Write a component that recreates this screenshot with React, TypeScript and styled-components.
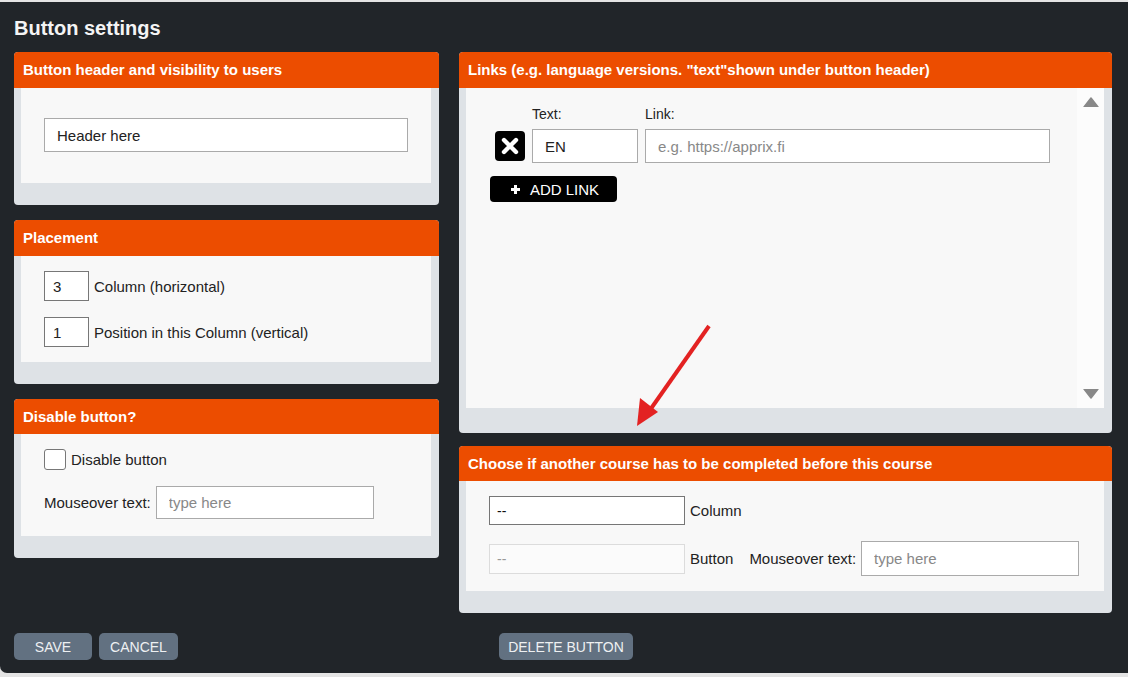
import React from 'react'
import styled, { createGlobalStyle } from 'styled-components'

const GlobalStyle = createGlobalStyle`
  html, body {
    margin: 0;
    padding: 0;
    background: #e4e4e4;
    overflow: hidden;
    font-family: "Liberation Sans", Arial, sans-serif;
  }
  * { box-sizing: border-box; }
`

const Page = styled.div`
  position: relative;
  margin-top: 2px;
  width: 1140px;
  height: 671px;
  background: #212529;
  border-radius: 0 0 0 7px;
  padding: 14px 14px 0 14px;
`

const Title = styled.h1`
  margin: 0 0 12px 0;
  font-size: 20px;
  line-height: 24px;
  font-weight: 700;
  color: #f4f4f4;
`

const Grid = styled.div`
  display: grid;
  grid-template-columns: 425px 653px;
  column-gap: 20px;
  row-gap: 20px;
`

const Column = styled.div<{ $gap: number }>`
  display: flex;
  flex-direction: column;
  gap: ${({ $gap }) => $gap}px;
`

const Card = styled.section<{ $pb?: number }>`
  background: #dee2e6;
  border-radius: 4px;
  padding-bottom: ${({ $pb }) => $pb ?? 22}px;
`

const CardHeader = styled.header<{ $h?: number }>`
  background: #ec4d00;
  color: #fff;
  border-radius: 4px 4px 0 0;
  height: ${({ $h }) => $h ?? 36}px;
  line-height: ${({ $h }) => $h ?? 36}px;
  padding-left: 9px;
  font-size: 15px;
  font-weight: 700;
  white-space: nowrap;
`

const CardInner = styled.div<{ $h: number; $pt?: number }>`
  margin: 0 8px 0 7px;
  height: ${({ $h }) => $h}px;
  background: #f8f8f8;
  padding: ${({ $pt }) => $pt ?? 15}px 0 0 23px;
  display: flex;
  flex-direction: column;
  gap: 16px;
  color: #222;
`

const TextInput = styled.input<{ $w: number; $h: number }>`
  width: ${({ $w }) => $w}px;
  height: ${({ $h }) => $h}px;
  border: 1px solid #aaa;
  background: #fff;
  padding: 0 0 0 12px;
  font-family: inherit;
  font-size: 15px;
  color: #222;
  outline: none;
  &::placeholder { color: #888; }
`

const Row = styled.div`
  display: flex;
  align-items: center;
  gap: 5px;
`

const NumberBox = styled.input`
  width: 45px;
  height: 30px;
  border: 1px solid #777;
  background: #fff;
  padding: 0 0 0 8px;
  font-family: inherit;
  font-size: 15px;
  color: #222;
`

const Label = styled.span<{ $mr?: number }>`
  font-size: 15px;
  color: #222;
  margin-right: ${({ $mr }) => $mr ?? 0}px;
`

const Check = styled.span`
  width: 22px;
  height: 21px;
  border: 1px solid #777;
  border-radius: 3px;
  background: #fff;
`

const LinksInner = styled.div`
  margin: 0 8px 0 7px;
  height: 320px;
  background: #f8f8f8;
  display: flex;
`

const LinksContent = styled.div`
  flex: 1;
  padding: 18px 0 0 29px;
  display: flex;
  flex-direction: column;
`

const LinkGrid = styled.div`
  display: grid;
  grid-template-columns: 30px 106px 405px;
  grid-template-rows: 16px 34px;
  column-gap: 7px;
  row-gap: 7px;
  align-items: center;
`

const SmallLabel = styled.span`
  font-size: 14px;
  color: #222;
  line-height: 16px;
`

const RemoveBtn = styled.button`
  width: 30px;
  height: 30px;
  border: none;
  border-radius: 4px;
  background: #000;
  display: flex;
  align-items: center;
  justify-content: center;
  padding: 0;
`

const AddBtn = styled.button`
  margin: 13px 0 0 -5px;
  width: 127px;
  height: 26px;
  border: none;
  border-radius: 4px;
  background: #000;
  color: #fff;
  font-family: inherit;
  font-size: 15px;
  display: flex;
  align-items: center;
  justify-content: center;
  gap: 9px;
  padding: 0 0 0 2px;
`

const Scrollbar = styled.div`
  width: 27px;
  background: #fcfcfc;
  display: flex;
  flex-direction: column;
  justify-content: space-between;
  align-items: center;
  padding: 9px 0 9px;
`

const Select = styled.div<{ $disabled?: boolean }>`
  width: 196px;
  height: ${({ $disabled }) => ($disabled ? 30 : 29)}px;
  border: 1px solid ${({ $disabled }) => ($disabled ? '#dcdcdc' : '#767676')};
  background: ${({ $disabled }) => ($disabled ? '#fbfbfb' : '#fff')};
  color: ${({ $disabled }) => ($disabled ? '#999' : '#111')};
  font-size: 14px;
  padding-left: 7px;
  display: flex;
  align-items: center;
`

const Footer = styled.div<{ $pl?: number }>`
  display: flex;
  gap: 7px;
  padding-left: ${({ $pl }) => $pl ?? 0}px;
`

const SlateBtn = styled.button<{ $w: number }>`
  width: ${({ $w }) => $w}px;
  height: 27px;
  border: none;
  border-radius: 5px;
  background: #627181;
  color: #eef0f2;
  font-family: inherit;
  font-size: 14px;
  padding: 0;
`

const Arrow = styled.svg`
  position: absolute;
  left: 630px;
  top: 318px;
  pointer-events: none;
`

export default function App() {
  return (
    <>
      <GlobalStyle />
      <Page>
        <Title>Button settings</Title>
        <Grid>
          <Column $gap={15}>
            <Card>
              <CardHeader>Button header and visibility to users</CardHeader>
              <CardInner $h={95} $pt={30}>
                <TextInput $w={364} $h={34} defaultValue="Header here" />
              </CardInner>
            </Card>
            <Card>
              <CardHeader>Placement</CardHeader>
              <CardInner $h={106}>
                <Row>
                  <NumberBox defaultValue="3" />
                  <Label>Column (horizontal)</Label>
                </Row>
                <Row>
                  <NumberBox defaultValue="1" />
                  <Label>Position in this Column (vertical)</Label>
                </Row>
              </CardInner>
            </Card>
            <Card>
              <CardHeader $h={35}>Disable button?</CardHeader>
              <CardInner $h={102}>
                <Row>
                  <Check />
                  <Label>Disable button</Label>
                </Row>
                <Row>
                  <Label>Mouseover text:</Label>
                  <TextInput $w={218} $h={33} placeholder="type here" />
                </Row>
              </CardInner>
            </Card>
          </Column>
          <Column $gap={13}>
            <Card $pb={25}>
              <CardHeader>Links (e.g. language versions. "text"shown under button header)</CardHeader>
              <LinksInner>
                <LinksContent>
                  <LinkGrid>
                    <span />
                    <SmallLabel>Text:</SmallLabel>
                    <SmallLabel>Link:</SmallLabel>
                    <RemoveBtn>
                      <svg width="18" height="18" viewBox="0 0 18 18">
                        <path d="M3 3 L15 15 M15 3 L3 15" stroke="#fff" strokeWidth="4.4" strokeLinecap="round" />
                      </svg>
                    </RemoveBtn>
                    <TextInput $w={106} $h={34} defaultValue="EN" />
                    <TextInput $w={405} $h={34} placeholder="e.g. https://apprix.fi" />
                  </LinkGrid>
                  <AddBtn>
                    <svg width="11" height="11" viewBox="0 0 11 11">
                      <path d="M5.5 1 V10 M1 5.5 H10" stroke="#fff" strokeWidth="3" />
                    </svg>
                    ADD LINK
                  </AddBtn>
                </LinksContent>
                <Scrollbar>
                  <svg width="16" height="10" viewBox="0 0 16 10">
                    <path d="M8 1 L15 10 H1 Z" fill="#888" strokeLinejoin="round" stroke="#888" strokeWidth="1.5" />
                  </svg>
                  <svg width="16" height="10" viewBox="0 0 16 10">
                    <path d="M1 0 H15 L8 9 Z" fill="#888" strokeLinejoin="round" stroke="#888" strokeWidth="1.5" />
                  </svg>
                </Scrollbar>
              </LinksInner>
            </Card>
            <Card>
              <CardHeader $h={35}>Choose if another course has to be completed before this course</CardHeader>
              <CardInner $h={110} $pt={15}>
                <Row>
                  <Select>--</Select>
                  <Label>Column</Label>
                </Row>
                <Row>
                  <Select $disabled>--</Select>
                  <Label $mr={11}>Button</Label>
                  <Label>Mouseover text:</Label>
                  <TextInput $w={218} $h={35} placeholder="type here" />
                </Row>
              </CardInner>
            </Card>
          </Column>
          <Footer>
            <SlateBtn $w={78}>SAVE</SlateBtn>
            <SlateBtn $w={79}>CANCEL</SlateBtn>
          </Footer>
          <Footer $pl={40}>
            <SlateBtn $w={134}>DELETE BUTTON</SlateBtn>
          </Footer>
        </Grid>
        <Arrow width="90" height="112" viewBox="0 0 90 112">
          <line x1="79" y1="6" x2="20" y2="90" stroke="#e32222" strokeWidth="4" />
          <path d="M7 106 L10 78 L28 92 Z" fill="#e32222" />
        </Arrow>
      </Page>
    </>
  )
}
